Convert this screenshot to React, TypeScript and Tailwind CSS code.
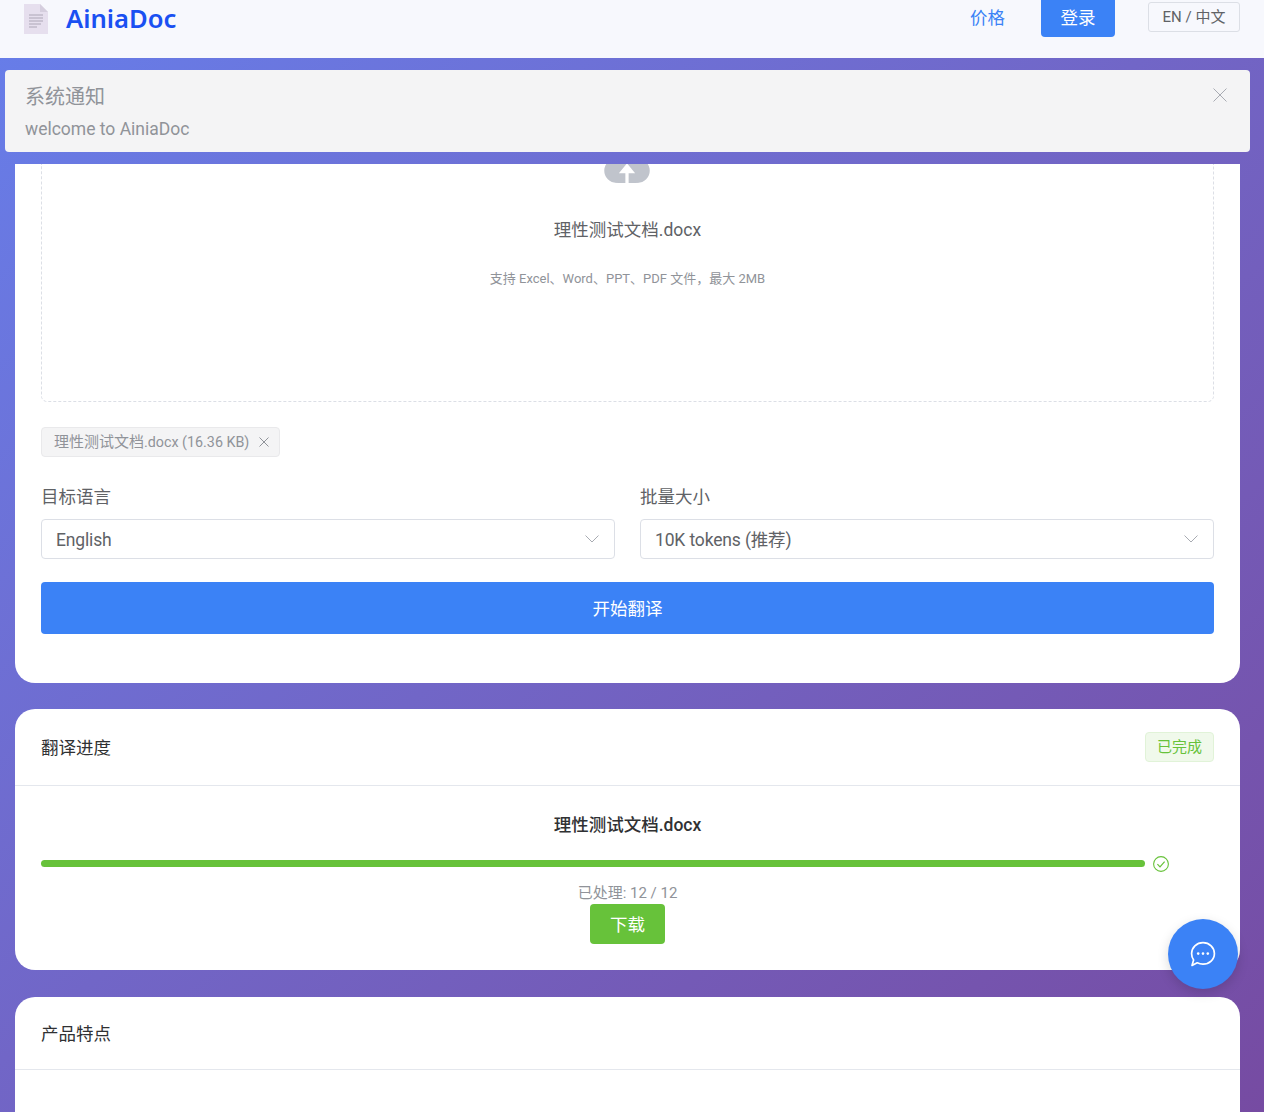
import React from "react";

const font = "font-['Roboto','Noto_Sans_CJK_SC',sans-serif]";

function DocIcon() {
  return (
    <svg width="24" height="30" viewBox="0 0 24 30">
      <path d="M0 0H16L24 8V30H0Z" fill="#e6dfee" />
      <path d="M16 0L24 8H16Z" fill="#d5cede" />
      <path d="M5 11H19M5 14H19M5 17H19M5 20H17M5 23H13" stroke="#aca6b6" strokeWidth="1" />
    </svg>
  );
}

function Cloud() {
  return (
    <svg width="52" height="52" viewBox="0 0 1024 1024" className="shrink-0">
      <path
        fill="#c0c4cc"
        d="M544 864V672h128L512 480 352 672h128v192H320v-1.6c-5.376.32-10.496 1.6-16 1.6A240 240 0 0 1 64 624c0-123.136 93.12-223.488 212.608-237.248A239.808 239.808 0 0 1 512 192a239.872 239.872 0 0 1 235.456 194.752c119.488 13.76 212.48 114.112 212.48 237.248a240 240 0 0 1-240 240c-5.376 0-10.56-1.28-16-1.6v1.6H544z"
      />
    </svg>
  );
}

function Cross({ size, color, width = 1 }: { size: number; color: string; width?: number }) {
  return (
    <svg width={size} height={size} viewBox={`0 0 ${size} ${size}`} className="shrink-0">
      <path d={`M0.5 0.5L${size - 0.5} ${size - 0.5}M${size - 0.5} 0.5L0.5 ${size - 0.5}`} stroke={color} strokeWidth={width} fill="none" />
    </svg>
  );
}

function Select({ label, value }: { label: string; value: string }) {
  return (
    <div className="flex-1 min-w-0">
      <div className="h-[24px] leading-[24px] text-[17.5px] text-[#606266]">{label}</div>
      <div className="mt-[10px] h-[40px] rounded-[4px] border border-[#dcdfe6] bg-white flex items-center justify-between pl-[14px] pr-[15px]">
        <span className="pt-[2px] text-[17.5px] tracking-[-0.15px] text-[#606266]">{value}</span>
        <svg width="14" height="8" viewBox="0 0 14 8" className="mb-[1px]">
          <path d="M0.5 0.5L7 7L13.5 0.5" fill="none" stroke="#a8abb2" strokeWidth="1" />
        </svg>
      </div>
    </div>
  );
}

export default function App() {
  return (
    <div className={`${font} relative h-[1112px] overflow-hidden bg-gradient-to-br from-[#667eea] to-[#764ba2]`}>
      <header className="h-[58px] bg-[#f7f8fd] pl-[24px] pr-[24px] flex items-start overflow-hidden">
        <div className="mt-[4px]"><DocIcon /></div>
        <span className="ml-[18px] mt-[1px] text-[25.6px] leading-[36px] font-semibold text-[#1a50f2] font-['Noto_Sans',sans-serif]">AiniaDoc</span>
        <span className="ml-auto mt-[6px] text-[17.5px] leading-[24px] text-[#3b82f6]">价格</span>
        <span className="ml-[36px] mt-[-3px] pt-[2px] h-[40px] w-[74px] rounded-[4px] bg-[#3b82f6] text-white text-[17.5px] flex items-center justify-center">登录</span>
        <span className="ml-[33px] mt-[2px] pt-[1px] h-[30px] w-[92px] rounded-[3px] border border-[#dcdfe6] text-[15px] text-[#606266] flex items-center justify-center">EN / 中文</span>
      </header>

      <div className="mt-[12px] ml-[5px] mr-[14px] h-[82px] rounded-[4px] bg-[#f4f4f5] pl-[20px] pr-[23px] pt-[14px] flex justify-between">
        <div>
          <div className="text-[20px] leading-[26px] text-[#909399]">系统通知</div>
          <div className="mt-[7px] text-[17.5px] leading-[24px] text-[#909399]">welcome to AiniaDoc</div>
        </div>
        <div className="mt-[4px]"><Cross size={14} color="#a8abb2" /></div>
      </div>

      <main className="mt-[12px] ml-[15px] w-[1225px] flex flex-col">
        <section className="h-[519px] rounded-b-[20px] bg-white px-[26px]">
          <div className="h-[238px] overflow-hidden rounded-b-[6px] border border-t-0 border-dashed border-[#dcdfe6] flex flex-col items-center">
            <div className="mt-[-25px] mr-[2px]"><Cloud /></div>
            <div className="mt-[27px] text-[17.5px] leading-[24px] text-[#606266]">理性测试文档.docx</div>
            <div className="mt-[28px] text-[13px] leading-[18px] text-[#909399]">支持 Excel、Word、PPT、PDF 文件，最大 2MB</div>
          </div>
          <div className="mt-[25px] w-fit h-[30px] rounded-[4px] border border-[#e9e9eb] bg-[#f4f4f5] pl-[12px] pr-[10px] flex items-center gap-[10px] text-[15px] text-[#909399]">
            <span>理性测试文档<span className="text-[14.3px]">.docx (16.36 KB)</span></span>
            <Cross size={10} color="#909399" />
          </div>
          <div className="mt-[28px] flex gap-[25px]">
            <Select label="目标语言" value="English" />
            <Select label="批量大小" value="10K tokens (推荐)" />
          </div>
          <div className="mt-[23px] pt-[2px] h-[52px] rounded-[4px] bg-[#3b82f6] text-white text-[17.5px] flex items-center justify-center">开始翻译</div>
        </section>

        <section className="mt-[26px] h-[261px] rounded-[20px] bg-white flex flex-col">
          <div className="h-[77px] shrink-0 border-b border-[#e4e7ed] px-[26px] flex items-center justify-between">
            <span className="pt-[2px] text-[17.5px] text-[#303133]">翻译进度</span>
            <span className="pt-[1px] h-[30px] w-[69px] rounded-[4px] border border-[#e1f3d8] bg-[#f0f9eb] text-[15px] text-[#67c23a] flex items-center justify-center">已完成</span>
          </div>
          <div className="flex flex-col items-center px-[26px]">
            <div className="mt-[26px] text-[17.5px] leading-[26px] font-medium text-[#303133]">理性测试文档.docx</div>
            <div className="mt-[18px] w-full h-[14px] flex items-center">
              <div className="w-[1104px] h-[7px] rounded-full bg-[#67c23a]" />
              <svg width="16" height="16" viewBox="0 0 16 16" className="ml-[8px] mt-[1px]">
                <circle cx="8" cy="8" r="7.4" fill="none" stroke="#67c23a" strokeWidth="1.1" />
                <path d="M4.4 8.2L7 10.8L11.6 5.6" fill="none" stroke="#67c23a" strokeWidth="1.2" />
              </svg>
            </div>
            <div className="mt-[13px] text-[15px] leading-[20px] text-[#909399]">已处理: 12 / 12</div>
            <div className="mt-[1px] pt-[2px] h-[40px] w-[75px] rounded-[4px] bg-[#67c23a] text-white text-[17.5px] flex items-center justify-center">下载</div>
          </div>
        </section>

        <section className="mt-[27px] h-[200px] rounded-[20px] bg-white">
          <div className="h-[73px] border-b border-[#e4e7ed] px-[26px] flex items-center">
            <span className="pt-[2px] text-[17.5px] text-[#303133]">产品特点</span>
          </div>
        </section>
      </main>

      <div className="absolute left-[1168px] top-[919px] h-[70px] w-[70px] rounded-full bg-[#3b82f6] shadow-[0_4px_12px_rgba(0,0,0,0.15)] flex items-center justify-center">
        <svg width="26" height="26" viewBox="0 0 26 26">
          <path d="M13 1.6C19.4 1.6 24.4 6.4 24.4 12.6C24.4 18.8 19.4 23.2 13 23.2C10.8 23.2 8.9 22.7 7.2 21.8L2 24.4L3.6 19C2.2 17.2 1.6 15 1.6 12.6C1.6 6.4 6.6 1.6 13 1.6Z" fill="none" stroke="white" strokeWidth="1.7" strokeLinejoin="round" />
          <circle cx="8.2" cy="12.6" r="1.3" fill="white" />
          <circle cx="13" cy="12.6" r="1.3" fill="white" />
          <circle cx="17.8" cy="12.6" r="1.3" fill="white" />
        </svg>
      </div>
    </div>
  );
}
